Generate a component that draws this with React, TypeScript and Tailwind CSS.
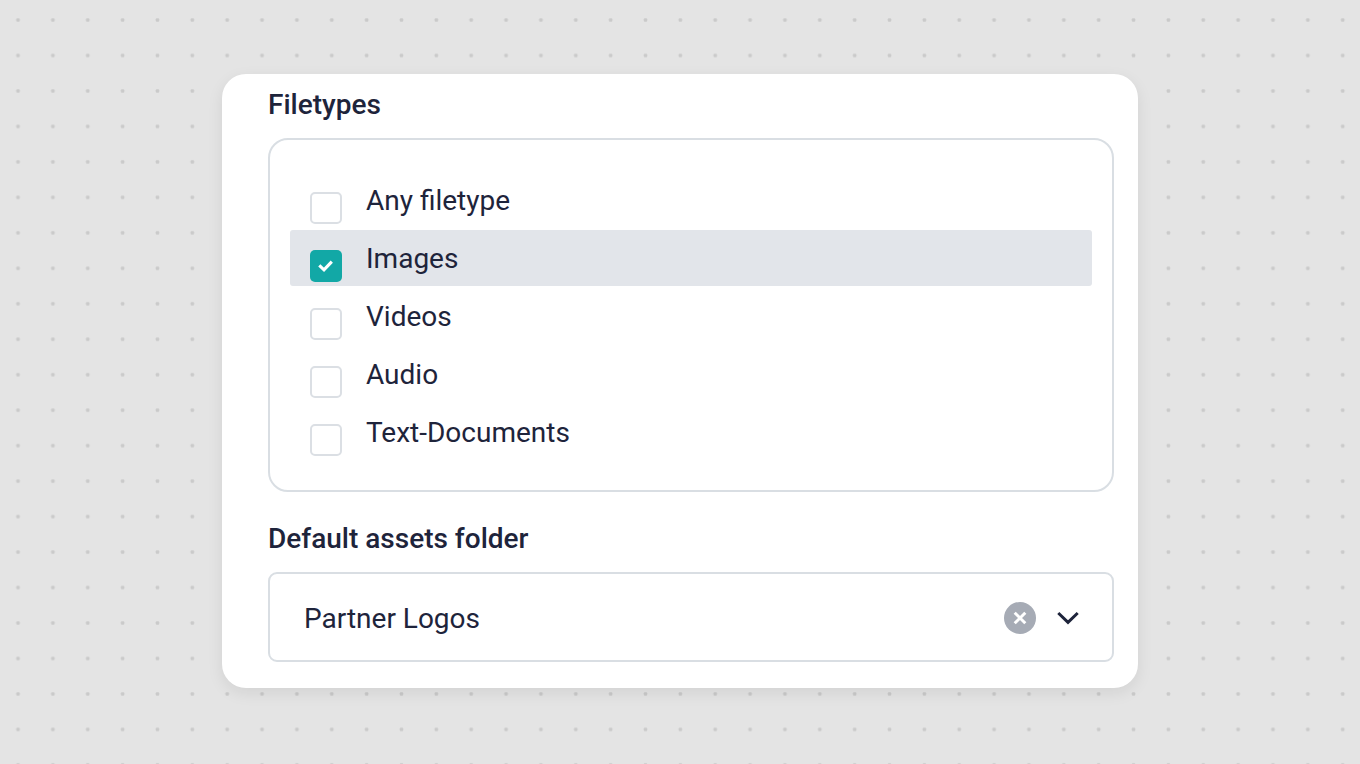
import React from "react";

const filetypes = [
  { label: "Any filetype", checked: false },
  { label: "Images", checked: true },
  { label: "Videos", checked: false },
  { label: "Audio", checked: false },
  { label: "Text-Documents", checked: false },
];

function DotGrid() {
  return (
    <svg className="absolute inset-0 h-full w-full" aria-hidden="true">
      <defs>
        <pattern id="dots" x="0.6" y="2.3" width="34.86" height="35.47" patternUnits="userSpaceOnUse">
          <rect x="15.68" y="15.98" width="3.5" height="3.5" rx="1" fill="#cacaca" />
        </pattern>
      </defs>
      <rect width="100%" height="100%" fill="url(#dots)" />
    </svg>
  );
}

function Checkbox({ checked }: { checked: boolean }) {
  if (!checked) {
    return <span className="mt-5 size-8 shrink-0 rounded-[5px] border-2 border-[#dbdfe4] bg-white" />;
  }
  return (
    <span className="mt-5 flex size-8 shrink-0 items-center justify-center rounded-[5px] bg-[#12a8a6]">
      <svg className="size-8" viewBox="0 0 32 32" fill="none" stroke="white" strokeWidth="3.1">
        <path d="M9.3 15.3L14 19.8L21.8 11.6" />
      </svg>
    </span>
  );
}

export default function App() {
  return (
    <main className="relative flex h-[764px] w-[1360px] justify-center overflow-hidden bg-[#e4e4e4] pt-[74px] font-['Roboto',sans-serif] text-[28px] leading-8 text-[#1e243b]">
      <DotGrid />
      <section className="relative flex h-[614px] w-[916px] flex-col rounded-[24px] bg-white pt-[14px] pr-6 pl-[46px] shadow-[0_5px_16px_rgba(0,0,0,0.08)]">
        <h2 className="h-[50px] pt-px font-medium">Filetypes</h2>
        <ul className="flex h-[354px] flex-col gap-0.5 rounded-[20px] border-2 border-[#d9dee3] px-5 pt-8">
          {filetypes.map(({ label, checked }) => (
            <li
              key={label}
              className={`flex h-14 gap-6 rounded-[3px] px-5 ${checked ? "bg-[#e2e5ea]" : ""}`}
            >
              <Checkbox checked={checked} />
              <span className="pt-[13px]">{label}</span>
            </li>
          ))}
        </ul>
        <h2 className="mt-[30px] h-[50px] pt-px font-medium">Default assets folder</h2>
        <div className="flex h-[90px] items-center rounded-[9px] border-2 border-[#d9dee3] pt-0.5 pr-8 pl-[34px]">
          <span className="grow pt-0.5">Partner Logos</span>
          <svg className="size-8" viewBox="0 0 32 32">
            <circle cx="16" cy="16" r="16" fill="#a6abb5" />
            <path d="M10.7 10.7L21.3 21.3M21.3 10.7L10.7 21.3" stroke="white" strokeWidth="3" />
          </svg>
          <svg className="ml-5 h-6 w-6" viewBox="0 0 24 24" fill="none" stroke="#1e243b" strokeWidth="3">
            <path d="M2.3 7L12 16.4L21.7 7" />
          </svg>
        </div>
      </section>
    </main>
  );
}
